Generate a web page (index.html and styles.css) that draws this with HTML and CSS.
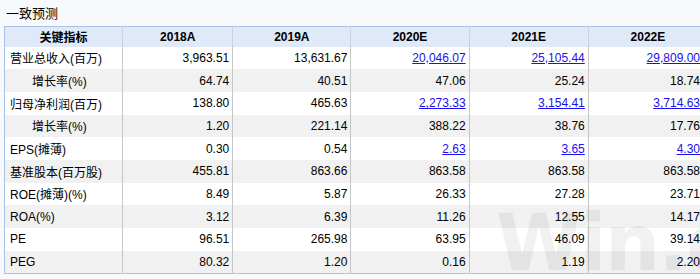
FILE: index.html
```html
<!DOCTYPE html>
<html lang="zh-CN">
<head>
  <meta charset="UTF-8" />
  <meta name="viewport" content="width=device-width, initial-scale=1.0" />
  <title>一致预测</title>
  <link rel="stylesheet" href="styles.css">
</head>

<body>
  <div class="panel">
    <h2 class="panel-title">一致预测</h2>

    <div class="table-wrap">
      <table class="forecast">
        <colgroup>
          <col class="c-name" />
          <col class="c-2018" />
          <col class="c-year" />
          <col class="c-year" />
          <col class="c-year2" />
          <col class="c-year2" />
        </colgroup>
        <thead>
          <tr>
            <th>关键指标</th>
            <th>2018A</th>
            <th>2019A</th>
            <th>2020E</th>
            <th>2021E</th>
            <th>2022E</th>
          </tr>
        </thead>
        <tbody>
          <tr>
            <td class="name">营业总收入(百万)</td>
            <td>3,963.51</td>
            <td>13,631.67</td>
            <td><a href="#">20,046.07</a></td>
            <td><a href="#">25,105.44</a></td>
            <td><a href="#">29,809.00</a></td>
          </tr>
          <tr>
            <td class="name sub">增长率(%)</td>
            <td>64.74</td>
            <td>40.51</td>
            <td>47.06</td>
            <td>25.24</td>
            <td>18.74</td>
          </tr>
          <tr>
            <td class="name">归母净利润(百万)</td>
            <td>138.80</td>
            <td>465.63</td>
            <td><a href="#">2,273.33</a></td>
            <td><a href="#">3,154.41</a></td>
            <td><a href="#">3,714.63</a></td>
          </tr>
          <tr>
            <td class="name sub">增长率(%)</td>
            <td>1.20</td>
            <td>221.14</td>
            <td>388.22</td>
            <td>38.76</td>
            <td>17.76</td>
          </tr>
          <tr>
            <td class="name">EPS(摊薄)</td>
            <td>0.30</td>
            <td>0.54</td>
            <td><a href="#">2.63</a></td>
            <td><a href="#">3.65</a></td>
            <td><a href="#">4.30</a></td>
          </tr>
          <tr>
            <td class="name">基准股本(百万股)</td>
            <td>455.81</td>
            <td>863.66</td>
            <td>863.58</td>
            <td>863.58</td>
            <td>863.58</td>
          </tr>
          <tr>
            <td class="name">ROE(摊薄)(%)</td>
            <td>8.49</td>
            <td>5.87</td>
            <td>26.33</td>
            <td>27.28</td>
            <td>23.71</td>
          </tr>
          <tr>
            <td class="name">ROA(%)</td>
            <td>3.12</td>
            <td>6.39</td>
            <td>11.26</td>
            <td>12.55</td>
            <td>14.17</td>
          </tr>
          <tr>
            <td class="name">PE</td>
            <td>96.51</td>
            <td>265.98</td>
            <td>63.95</td>
            <td>46.09</td>
            <td>39.14</td>
          </tr>
          <tr>
            <td class="name">PEG</td>
            <td>80.32</td>
            <td>1.20</td>
            <td>0.16</td>
            <td>1.19</td>
            <td>2.20</td>
          </tr>
        </tbody>
      </table>

      <!-- watermark over the table -->
      <div class="watermark">Win.d</div>
    </div>
  </div>
</body>
</html>
```

FILE: styles.css
```css
:root {
  --page-bg: #f8f9fc;
  --text-color: #000;
  --head-bg: #dfe9f7;
  --outer-border: #a9c3e6;
  --grid-line: #c6c6c6;
  --row-alt: #f1f1f1;
  --link-blue: #1a10f0;
}

html,
body {
  margin: 0;
  background: var(--page-bg);
  overflow: hidden;
}

body {
  font-family: "Liberation Sans", "Noto Sans CJK SC", sans-serif;
  font-size: 12px;
  color: var(--text-color);
}

.panel {
  padding: 6px 0 0 4px;
}

.panel-title {
  margin: 0 0 4px 2px;
  font-size: 13px;
  font-weight: normal;
  line-height: 16px;
  color: #000;
}

/* the table is wider than the frame; its right edge is clipped */
.table-wrap {
  position: relative;
  width: 696px;
  overflow: hidden;
}

table.forecast {
  width: 704px;
  table-layout: fixed;
  border-collapse: collapse;
  border: 1px solid var(--outer-border);
  background: #fff;
}

col.c-name { width: 117px; }
col.c-2018 { width: 109px; }
col.c-year { width: 117px; }
col.c-year2 { width: 118px; }

th,
td {
  padding: 0 3px;
  border-left: 1px solid var(--grid-line);
  white-space: nowrap;
  overflow: hidden;
}

th:first-child,
td:first-child {
  border-left: none;
}

thead tr {
  height: 20px;
  background: var(--head-bg);
}

th {
  font-weight: bold;
  text-align: center;
  border-left-color: #c9d3e0;
}

tbody tr {
  height: 22.7px;
}

tbody tr:nth-child(even) {
  background: var(--row-alt);
}

td {
  text-align: right;
}

td.name {
  text-align: left;
  padding-left: 5px;
}

td.name.sub {
  padding-left: 27px;
}

td a {
  color: var(--link-blue);
  text-decoration: underline;
}

td:last-child {
  padding-right: 7px;
}

.watermark {
  position: absolute;
  left: 492px;
  top: 178px;
  font-family: "DejaVu Sans", sans-serif;
  font-weight: bold;
  font-size: 78px;
  line-height: 1;
  letter-spacing: -2px;
  color: rgba(0, 0, 0, 0.055);
  pointer-events: none;
}
```
